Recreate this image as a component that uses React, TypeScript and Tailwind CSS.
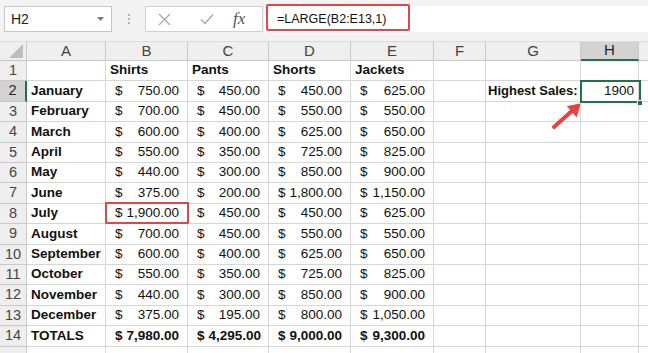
import React from "react";

const W = ["w-[27px]", "w-[79px]", "w-[82px]", "w-[81px]", "w-[82px]", "w-[83px]", "w-[52px]", "w-[95px]", "w-[58px]", "w-[40px]"];
const H = ["h-[20px]", "h-[21px]", "h-[20px]", "h-[21px]", "h-[20px]", "h-[20px]", "h-[21px]", "h-[20px]", "h-[21px]", "h-[20px]", "h-[20px]", "h-[21px]", "h-[20px]", "h-[21px]"];

type Row = [string, string, string, string, string];
const data: Row[] = [
  ["", "Shirts", "Pants", "Shorts", "Jackets"],
  ["January", "750.00", "450.00", "450.00", "625.00"],
  ["February", "700.00", "450.00", "550.00", "550.00"],
  ["March", "600.00", "400.00", "625.00", "650.00"],
  ["April", "550.00", "350.00", "725.00", "825.00"],
  ["May", "440.00", "300.00", "850.00", "900.00"],
  ["June", "375.00", "200.00", "1,800.00", "1,150.00"],
  ["July", "1,900.00", "450.00", "450.00", "625.00"],
  ["August", "700.00", "450.00", "550.00", "550.00"],
  ["September", "600.00", "400.00", "625.00", "650.00"],
  ["October", "550.00", "350.00", "725.00", "825.00"],
  ["November", "440.00", "300.00", "850.00", "900.00"],
  ["December", "375.00", "195.00", "800.00", "1,050.00"],
  ["TOTALS", "7,980.00", "4,295.00", "9,000.00", "9,300.00"],
];

const letters = ["A", "B", "C", "D", "E", "F", "G", "H", ""];

function Money({ v, bold }: { v: string; bold?: boolean }) {
  return (
    <div
      className={`flex w-full items-center justify-between gap-[4px] pl-[9px] pr-[8px] text-[#111] ${
        bold ? "text-[13.5px] font-bold" : "text-[13.5px]"
      }`}
    >
      <span>$</span>
      <span>{v}</span>
    </div>
  );
}

export default function App() {
  return (
    <div
      className="relative w-[648px] h-[353px] overflow-hidden bg-[#f3f3f3] text-[#111]"
      style={{ fontFamily: '"Liberation Sans", Arial, sans-serif' }}
    >
      {/* Toolbar */}
      <div className="flex h-[41px] items-start pt-[6px] pl-[4px]">
        <div className="relative flex h-[26px] w-[108px] items-center border border-[#c6c6c6] bg-white pl-[6px] text-[14px] text-[#222]">
          H2
          <svg className="absolute right-[7px] top-[10px]" width="7" height="4" viewBox="0 0 7 4">
            <polygon points="0,0 7,0 3.5,4" fill="#7a7a7a" />
          </svg>
        </div>
        <div className="flex h-[26px] w-[33px] flex-col items-center justify-center gap-[2px]">
          <span className="block h-[2px] w-[2px] bg-[#b5b5b5]" />
          <span className="block h-[2px] w-[2px] bg-[#b5b5b5]" />
          <span className="block h-[2px] w-[2px] bg-[#b5b5b5]" />
        </div>
        <div className="flex h-[26px] w-[118px] items-center border border-[#d0d0d0] bg-white">
          <svg className="ml-[12px]" width="13" height="13" viewBox="0 0 13 13">
            <path d="M1 1 L12 12 M12 1 L1 12" stroke="#a9a9a9" strokeWidth="1.3" fill="none" />
          </svg>
          <svg className="ml-[29px]" width="14" height="12" viewBox="0 0 14 12">
            <path d="M1 6.5 L5 10.5 L13 1.5" stroke="#a9a9a9" strokeWidth="1.4" fill="none" />
          </svg>
          <span
            className="ml-[19px] text-[17px] italic text-[#555]"
            style={{ fontFamily: '"Liberation Serif", "Times New Roman", serif' }}
          >
            fx
          </span>
        </div>
        <div className="ml-[1px] flex h-[26px] flex-1 items-center bg-white pl-[13px] text-[12.5px] text-[#111]">
          =LARGE(B2:E13,1)
        </div>
      </div>

      {/* Column header row */}
      <div className="flex h-[20px] border-t border-[#dadada] bg-[#efefef]">
        <div className={`${W[0]} relative h-full shrink-0 border-r border-b border-[#c9c9c9]`}>
          <svg className="absolute right-[3px] bottom-[2px]" width="14" height="14" viewBox="0 0 14 14">
            <polygon points="0,14 14,14 14,0" fill="#bdbdbd" />
          </svg>
        </div>
        {letters.map((l, i) => (
          <div
            key={i}
            className={`${W[i + 1]} flex h-full shrink-0 items-center justify-center border-r text-[15px] ${
              l === "H"
                ? "border-b-2 border-b-[#217346] border-r-[#c9c9c9] bg-[#d3d3d3] text-[#262626]"
                : "border-b border-[#c9c9c9] text-[#444]"
            }`}
          >
            {l}
          </div>
        ))}
      </div>

      {/* Data rows */}
      {data.map((r, ri) => {
        const rowNum = ri + 1;
        const isTotal = rowNum === 14;
        const isHeader = rowNum === 1;
        return (
          <div key={ri} className={`flex ${H[ri]}`}>
            <div
              className={`${W[0]} flex h-full shrink-0 items-center justify-center border-b border-[#c9c9c9] text-[14.5px] ${
                rowNum === 2
                  ? "border-r-2 border-r-[#217346] bg-[#d3d3d3] text-[#262626]"
                  : "border-r bg-[#efefef] text-[#444]"
              }`}
            >
              {rowNum}
            </div>
            <div className={`${W[1]} flex h-full shrink-0 items-center border-r border-b border-[#d6d6d6] bg-white pl-[4px] text-[13.5px] font-bold`}>
              {r[0]}
            </div>
            {[1, 2, 3, 4].map((c) => (
              <div
                key={c}
                className={`${W[c + 1]} flex h-full shrink-0 items-center border-r border-b border-[#d6d6d6] bg-white`}
              >
                {isHeader ? (
                  <span className="pl-[4px] text-[13.5px] font-bold">{r[c]}</span>
                ) : (
                  <Money v={r[c]} bold={isTotal} />
                )}
              </div>
            ))}
            <div className={`${W[6]} h-full shrink-0 border-r border-b border-[#d6d6d6] bg-white`} />
            <div className={`${W[7]} flex h-full shrink-0 items-center whitespace-nowrap border-r border-b border-[#d6d6d6] bg-white pl-[2px] text-[13px] font-bold`}>
              {rowNum === 2 ? "Highest Sales:" : ""}
            </div>
            <div className={`${W[8]} flex h-full shrink-0 items-center justify-end border-r border-b border-[#d6d6d6] bg-white pr-[4px] text-[13.5px]`}>
              {rowNum === 2 ? "1900" : ""}
            </div>
            <div className={`${W[9]} h-full shrink-0 border-b border-[#d6d6d6] bg-white`} />
          </div>
        );
      })}
      <div className="flex h-[10px]">
        <div className={`${W[0]} h-full shrink-0 border-r border-[#c9c9c9] bg-[#efefef]`} />
        {[1, 2, 3, 4, 5, 6, 7, 8].map((c) => (
          <div key={c} className={`${W[c]} h-full shrink-0 border-r border-[#d6d6d6] bg-white`} />
        ))}
        <div className={`${W[9]} h-full shrink-0 bg-white`} />
      </div>

      {/* Overlays */}
      <div className="pointer-events-none absolute left-[266px] top-[4px] h-[27px] w-[144px] rounded-[2px] border-2 border-[#e0474c]" />
      <div className="pointer-events-none absolute left-[105px] top-[202px] h-[22px] w-[84px] rounded-[1px] border-2 border-[#e0474c]" />
      <div className="pointer-events-none absolute left-[580px] top-[80px] h-[23px] w-[61px] border-2 border-[#217346]" />
      <div className="pointer-events-none absolute left-[637px] top-[100px] h-[6px] w-[6px] border border-white bg-[#217346]" />
      <svg className="pointer-events-none absolute left-[548px] top-[100px]" width="36" height="32" viewBox="0 0 36 32">
        <line x1="6" y1="27" x2="25" y2="10" stroke="#e8413f" strokeWidth="4" strokeLinecap="round" />
        <polygon points="32,4 28.5,16.5 19.5,6.5" fill="#e8413f" stroke="#e8413f" strokeWidth="1" strokeLinejoin="round" />
      </svg>
    </div>
  );
}
